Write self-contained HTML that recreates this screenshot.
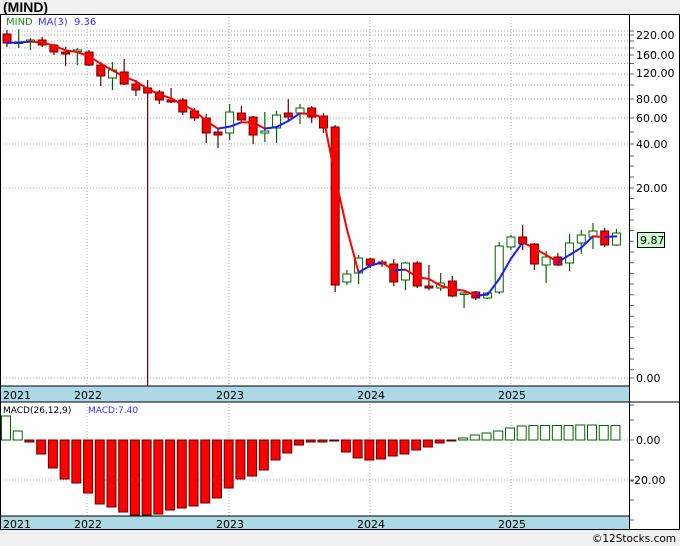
<!DOCTYPE html>
<html><head><meta charset="utf-8"><style>
html,body{margin:0;padding:0;background:#f0f0f0;}
body{width:680px;height:546px;overflow:hidden;position:relative;font-family:"Liberation Sans","DejaVu Sans",sans-serif;}
svg{position:absolute;left:0;top:0;}
</style></head><body>
<svg id="s" width="680" height="546" xmlns="http://www.w3.org/2000/svg" font-family="'DejaVu Sans','Liberation Sans',sans-serif">
<rect x="0" y="14" width="680" height="516" fill="#fff"/>
<g id="grid"></g>
<rect x="0" y="386" width="630" height="16" fill="#add8e6"/>
<rect x="0" y="516" width="630" height="14" fill="#add8e6"/>
<line x1="0" y1="386" x2="630" y2="386" stroke="#000"/>
<line x1="0" y1="402" x2="680" y2="402" stroke="#000"/>
<line x1="0" y1="516" x2="630" y2="516" stroke="#000"/>
<g id="plot"></g>
<line x1="629.5" y1="14" x2="629.5" y2="530" stroke="#000"/>
<rect x="0.5" y="14.5" width="679" height="515" fill="none" stroke="#000"/>
<text x="3" y="12" font-family="'Liberation Sans',sans-serif" font-weight="bold" font-size="14" fill="#000">(MIND)</text>
<text x="6" y="25" font-size="10" fill="#228b22">MIND</text>
<text x="38" y="25" font-size="10" fill="#3333ff">MA(3)</text>
<text x="74" y="25" font-size="10" fill="#3333ff">9.36</text>
<text x="3" y="413" font-size="9" fill="#000">MACD(26,12,9)</text>
<text x="88" y="413" font-size="9" fill="#3333ff">MACD:7.40</text>
<g font-size="11" fill="#000">
<text x="636" y="39">220.00</text><text x="636" y="59">160.00</text><text x="636" y="77">120.00</text>
<text x="636" y="103">80.00</text><text x="636" y="122">60.00</text><text x="636" y="148">40.00</text>
<text x="636" y="192">20.00</text><text x="636" y="382">0.00</text>
<text x="636" y="444">0.00</text><text x="630" y="484">-20.00</text>
</g>
<rect x="637.5" y="232.5" width="27" height="15" fill="#ccffcc" stroke="#000"/>
<text x="640" y="244" font-size="11" fill="#000">9.87</text>
<g font-size="11" fill="#000">
<text x="3" y="399">2021</text><text x="74" y="399">2022</text><text x="216" y="399">2023</text><text x="357" y="399">2024</text><text x="498" y="399">2025</text>
<text x="3" y="528">2021</text><text x="74" y="528">2022</text><text x="216" y="528">2023</text><text x="357" y="528">2024</text><text x="498" y="528">2025</text>
</g>
<text x="676" y="542" text-anchor="end" font-size="10.5" fill="#000">©12Stocks.com</text>
</svg>
<script>
var NS="http://www.w3.org/2000/svg";
function el(p,t,a){var e=document.createElementNS(NS,t);for(var k in a)e.setAttribute(k,a[k]);p.appendChild(e);return e;}
var g=document.getElementById('grid'),p=document.getElementById('plot');
[31,35,41,48,55,63.5,74,85,99,118,144,188,378].forEach(function(y){el(g,'line',{x1:0,x2:630,y1:y,y2:y,stroke:'#aaa','stroke-dasharray':'1,2'});});
[440,480].forEach(function(y){el(g,'line',{x1:0,x2:630,y1:y,y2:y,stroke:'#aaa','stroke-dasharray':'1,2'});});
[87,229,370,511].forEach(function(x){el(g,'line',{x1:x,x2:x,y1:14,y2:530,stroke:'#aaa','stroke-dasharray':'1,2'});});
var tk=[31,35,41,48,55,63.5,74,85,99,118,132,144,156,166,177,188];
for(var y=198.5;y<=380;y+=10.7)tk.push(y);
tk.push(378);
[405,420,440,460,480,500,520].forEach(function(y){tk.push(y);});
tk.forEach(function(y){el(p,'line',{x1:629,x2:634,y1:y,y2:y,stroke:'#666'});});
var C=[[34,43,30,47],[43,42,29,48],[42,40,38,50],[40,45,37,47],[45,52,44,55],[52,54,47,66],[51,50,48,65],[52,65,50,66],[65,76,62,86],[78,70,62,90],
[72,84,59,85],[84,90,80,96],[88,93,80,386],[92,100,90,104],[100,102,88,103],[100,112,98,115],[111,118,108,121],[118,133,114,143],[132,135,128,148],[133,112,104,140],
[113,120,106,123],[117,135,116,144],[133,131,112,142],[128,115,111,143],[113,117,99,122],[113,108,104,124],[108,117,106,123],[116,128,113,133],[127,285,125,292],[282,274,270,285],
[273,258,255,284],[259,265,258,268],[262,264,260,267],[264,282,259,286],[280,263,262,290],[263,286,261,288],[286,288,265,290],[288,283,273,291],[281,296,276,297],[293.5,293,292,308],
[292,298,291,300],[298,293,292,299],[292,246,242,294],[247,237,235,250],[237,244,225,250],[244,264,243,270],[265,257,251,283],[257,265,253,266],[263,243,234,271],[243,235,230,254],
[237,231,223,249],[231,245,228,247],[245,233,229,246]];
var cl=[];
C.forEach(function(c,i){var x=7+11.72*i,o=c[0],cc=c[1],red=cc>o;cl.push(cc);
 var col=red?'#600':'#006400';
 el(p,'line',{x1:x,x2:x,y1:c[2],y2:c[3],stroke:col,'stroke-width':1.2});
 var t=Math.min(o,cc),h=Math.max(Math.abs(cc-o),1.5);
 el(p,'rect',{x:x-4,y:t,width:8,height:h,fill:red?'#f00':'#fff',stroke:col,'stroke-width':1});
});
var ma=cl.map(function(v,i){var s=0,n=0;for(var j=Math.max(0,i-2);j<=i;j++){s+=cl[j];n++;}return s/n;});
for(var i=1;i<ma.length;i++){var x0=7+11.72*(i-1),x1=7+11.72*i;
 el(p,'line',{x1:x0,y1:ma[i-1],x2:x1,y2:ma[i],stroke:ma[i]<ma[i-1]?'#1a1aff':'#f00','stroke-width':2,'stroke-linecap':'round'});}
var M=[416,431,442,454,468,479,483,493,504,507,512,515,515,514,510,508,506,503,498,488,479,476,470,460,453,445,442,442,441,452,458,460,459,456,454,450,447,443,441,438,435,433,431,428,426,425.5,425.5,425.5,425.5,425,425,425.5,425.5];
M.forEach(function(v,i){var x=6+11.72*i;
 if(v<440)el(p,'rect',{x:x-4.5,y:v,width:9,height:440-v,fill:'#fff',stroke:'#006400'});
 else el(p,'rect',{x:x-4.5,y:440,width:9,height:Math.max(v-440,1),fill:'#f00',stroke:'#600'});
});
</script>
</body></html>
